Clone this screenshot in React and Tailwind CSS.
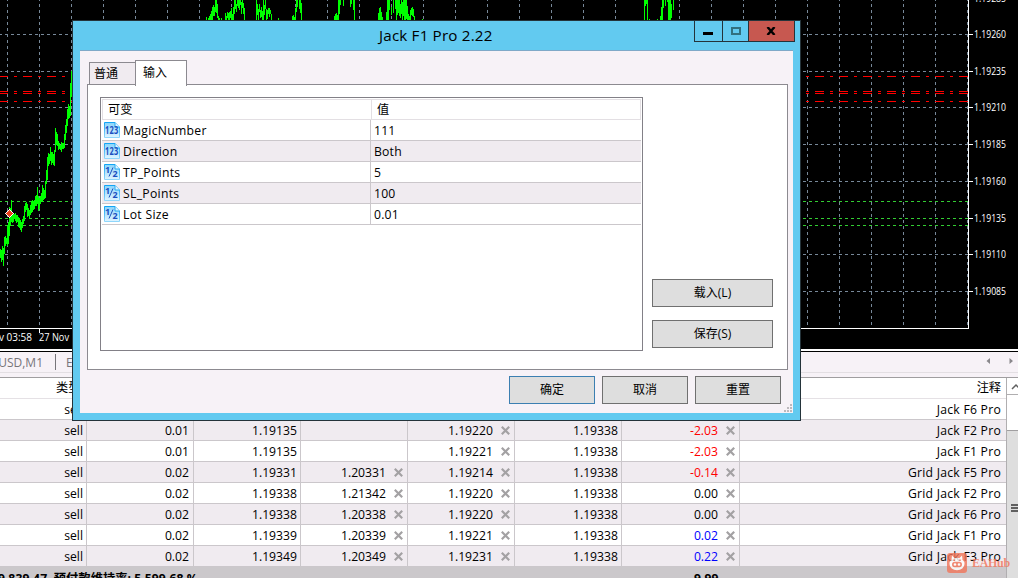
import React from 'react';

const orders = [
  { type: 'sell', size: '0.01', price: '', sl: '', tp: '', now: '', profit: '', comment: 'Jack F6 Pro' },
  { type: 'sell', size: '0.01', price: '1.19135', sl: '', tp: '1.19220', now: '1.19338', profit: '-2.03', comment: 'Jack F2 Pro' },
  { type: 'sell', size: '0.01', price: '1.19135', sl: '', tp: '1.19221', now: '1.19338', profit: '-2.03', comment: 'Jack F1 Pro' },
  { type: 'sell', size: '0.02', price: '1.19331', sl: '1.20331', tp: '1.19214', now: '1.19338', profit: '-0.14', comment: 'Grid Jack F5 Pro' },
  { type: 'sell', size: '0.02', price: '1.19338', sl: '1.21342', tp: '1.19220', now: '1.19338', profit: '0.00', comment: 'Grid Jack F2 Pro' },
  { type: 'sell', size: '0.02', price: '1.19338', sl: '1.20338', tp: '1.19220', now: '1.19338', profit: '0.00', comment: 'Grid Jack F6 Pro' },
  { type: 'sell', size: '0.02', price: '1.19339', sl: '1.20339', tp: '1.19221', now: '1.19338', profit: '0.02', comment: 'Grid Jack F1 Pro' },
  { type: 'sell', size: '0.02', price: '1.19349', sl: '1.20349', tp: '1.19231', now: '1.19338', profit: '0.22', comment: 'Grid Jack F3 Pro' },
];

const inputs = [
  { kind: '123', name: 'MagicNumber', value: '111' },
  { kind: '123', name: 'Direction', value: 'Both' },
  { kind: '1/2', name: 'TP_Points', value: '5' },
  { kind: '1/2', name: 'SL_Points', value: '100' },
  { kind: '1/2', name: 'Lot Size', value: '0.01' },
];

const prices = [
  [-2, '1.19285'], [34, '1.19260'], [71, '1.19235'], [107, '1.19210'], [144, '1.19185'],
  [181, '1.19160'], [218, '1.19135'], [254, '1.19110'], [291, '1.19085'],
];

// [top, bottom] of every one pixel bar, starting from x = 0
const leftBars = [
  [249, 258], [250, 262], [246, 260], [248, 266], [237, 254], [236, 246], [238, 244], [226, 246], [222, 244],
  [207, 236], [208, 226], [200, 222], [212, 223], [214, 222], [214, 219], [213, 221], [215, 223], [215, 222],
  [217, 227], [218, 228], [220, 230], [222, 232], [219, 228], [216, 224], [206, 221], [203, 212], [202, 210],
  [204, 217], [208, 216], [210, 219], [205, 215], [201, 213], [200, 212], [201, 210], [200, 209], [196, 206],
  [195, 206], [187, 204], [196, 211], [198, 209], [196, 204], [193, 201], [185, 202], [188, 200], [190, 199],
  [181, 198], [170, 184], [157, 180], [153, 166], [154, 164], [147, 161], [152, 165], [152, 163], [154, 165],
  [150, 166], [128, 152], [132, 145], [134, 146], [141, 150], [143, 149], [145, 150], [142, 152], [143, 149],
  [143, 149], [134, 148], [125, 140], [119, 133], [109, 126], [104, 119], [106, 118], [83, 116], [71, 97],
];

// spikes that reach above the dialog: [x, top, bottom]
const topBars = [
  [206, 17, 20], [208, 18, 20], [209, 16, 20], [210, 14, 20], [211, 11, 20], [212, 7, 20], [213, 5, 16], [214, 7, 16],
  [215, 0, 12], [216, 0, 13], [217, 4, 18], [218, 16, 20], [219, 18, 20], [221, 18, 20],
  [225, 13, 20], [226, 16, 20], [227, 12, 18], [228, 13, 20], [229, 12, 20], [230, 11, 18], [231, 8, 20], [232, 14, 20],
  [233, 7, 20], [234, 0, 14], [235, 0, 9], [236, 4, 12], [237, 0, 6], [238, 0, 8], [239, 0, 10], [240, 0, 5],
  [241, 2, 14], [242, 0, 8], [243, 3, 14], [244, 8, 20],
  [256, 0, 20], [257, 4, 15], [258, 9, 20], [259, 4, 12], [260, 10, 18], [261, 7, 17], [262, 11, 20], [263, 0, 20],
  [264, 5, 15], [265, 0, 9], [266, 9, 20], [267, 10, 19], [268, 8, 14], [269, 8, 17], [270, 10, 14], [271, 14, 20], [278, 18, 20],
  [292, 16, 20], [293, 15, 20], [294, 17, 20], [295, 8, 20], [296, 0, 12], [297, 0, 7], [299, 0, 9], [300, 0, 13], [301, 3, 20],
  [334, 16, 20], [335, 14, 20], [336, 13, 20], [337, 15, 20], [338, 0, 20], [339, 0, 14], [340, 0, 5], [343, 0, 6],
  [350, 0, 7], [351, 0, 4], [353, 0, 10], [354, 0, 20],
  [378, 13, 20], [379, 8, 20], [380, 7, 20], [381, 12, 20], [382, 17, 20], [386, 12, 20], [387, 0, 20], [388, 0, 20],
  [389, 0, 10], [391, 7, 15], [393, 0, 13], [395, 0, 9], [396, 0, 20], [397, 0, 15], [398, 0, 13], [399, 0, 16],
  [400, 4, 18], [401, 0, 14], [402, 2, 20], [403, 0, 16], [404, 0, 20], [405, 0, 20], [406, 0, 19], [407, 6, 20],
  [408, 14, 20], [409, 16, 20], [410, 10, 20], [411, 8, 15], [412, 7, 16], [413, 9, 17], [414, 16, 20], [422, 19, 20],
  [644, 0, 20], [645, 0, 6], [646, 0, 4], [647, 0, 20], [649, 19, 20], [657, 19, 20], [660, 16, 20], [661, 7, 20], [662, 0, 20],
  [663, 0, 8], [665, 0, 6], [667, 0, 2], [668, 0, 20], [669, 0, 20], [670, 0, 20], [671, 4, 18], [673, 0, 10],
];

const columns = Array.from({ length: 31 }, (_, i) => 7 + i * 32);

const Chart = () => (
  <svg width="1018" height="349" className="block shrink-0 bg-black" shapeRendering="crispEdges">
    <g stroke="#778899" strokeDasharray="3 3">
      {columns.map((x) => (
        <path key={x} d={`M${x + 0.5} -2V328`} />
      ))}
      {[34, 71, 107, 144, 181, 254, 291].map((y) => (
        <path key={y} d={`M-1 ${y + 0.5}H968`} />
      ))}
    </g>
    <g stroke="#32cd32" strokeDasharray="3 3">
      {[201, 218, 225].map((y) => (
        <path key={y} d={`M-1 ${y + 0.5}H968`} />
      ))}
    </g>
    <g stroke="#ff0000" strokeDasharray="9 6 3 6">
      {[76, 91, 93, 101].map((y) => (
        <path key={y} d={`M-1 ${y + 0.5}H968`} />
      ))}
    </g>
    <g fill="#00ff00">
      {leftBars.map(([top, bottom], x) => (
        <rect key={x} x={x} y={top} width="1" height={bottom - top} />
      ))}
      {topBars.map(([x, top, bottom]) => (
        <rect key={x} x={x} y={top} width="1" height={bottom - top} />
      ))}
    </g>
    <path d="M9.5 209.5L13.5 213.5L9.5 217.5L5.5 213.5Z" fill="#e8401c" stroke="#fff" />
    <path d="M8 212h3v-1h-2v5h1v-4" fill="#e8401c" />
    <path d="M0 328.5H968.5V0M39.5 329V333" fill="none" stroke="#fff" />
    {prices.map(([y, label]) => (
      <g key={label}>
        <path d={`M969 ${y + 0.5}H973`} stroke="#fff" />
        <text x="974" y={y + 4} textLength="32" lengthAdjust="spacingAndGlyphs" fill="#fff" className="font-['Open_Sans',sans-serif] text-[11px]">
          {label}
        </text>
      </g>
    ))}
    <g fill="#fff" className="font-['Open_Sans',sans-serif] text-[10px]">
      <text x="-1" y="341" textLength="33" lengthAdjust="spacingAndGlyphs">v 03:58</text>
      <text x="39" y="341" textLength="30" lengthAdjust="spacingAndGlyphs">27 Nov</text>
    </g>
  </svg>
);

const Cross = () => (
  <svg width="9" height="9" viewBox="0 0 9 9" className="mb-px ml-2 shrink-0">
    <path d="M0.8 0.8L8.2 8.2M8.2 0.8L0.8 8.2" stroke="#a3a1a3" strokeWidth="2.2" />
  </svg>
);

const ParamIcon = ({ kind }) => (
  <svg width="16" height="16" viewBox="0 0 16 16" className="mb-0.5 shrink-0">
    <defs>
      <linearGradient id="page" x1="0" y1="0" x2="0" y2="1">
        <stop offset="0" stopColor="#8ad4fa" />
        <stop offset="1" stopColor="#dff4ff" />
      </linearGradient>
      <linearGradient id="edge" x1="0" y1="0" x2="0" y2="1">
        <stop offset="0" stopColor="#12a5f5" />
        <stop offset="1" stopColor="#8fd6fb" />
      </linearGradient>
    </defs>
    <path d="M0.5 15.5V0.5H11L15.5 5V15.5Z" fill="url(#page)" stroke="url(#edge)" />
    <path d="M11 0.5V5H15.5" fill="#e4f6ff" stroke="#25a9f2" />
    {kind === '123' ? (
      <text x="1" y="12" textLength="13.5" lengthAdjust="spacingAndGlyphs" fill="#1b4fc0" className="font-['Open_Sans',sans-serif] text-[10px] font-bold">
        123
      </text>
    ) : (
      <g fill="#1b4fc0" className="font-['Open_Sans',sans-serif] text-[9px] font-bold">
        <text x="1" y="8.5">1</text>
        <path d="M5 12.5L9 3.5" stroke="#1b4fc0" />
        <text x="8.5" y="13">2</text>
      </g>
    )}
  </svg>
);

const TabBar = () => (
  <div className="flex h-[29px] shrink-0 flex-col bg-[#f7f2f7]">
    <div className="h-[3px] shrink-0 border-b border-black bg-white" />
    <div className="flex h-[21px] items-center border-b border-[#e3dfe3] text-[12px] text-[#77757a]">
      <span className="-ml-[7px] w-[50px] pt-px text-right whitespace-nowrap">JUSD,M1</span>
      <span className="ml-3 h-4 w-px bg-[#77757a]" />
      <span className="ml-2.5 pt-px">E</span>
      <svg width="30" height="8" viewBox="0 0 30 8" className="mr-0.5 mb-0.5 ml-auto shrink-0" fill="#8a888c">
        <path d="M4 1V7L0.5 4ZM23.5 1V7L27 4Z" />
      </svg>
    </div>
    <div className="mt-auto h-0.5 border-b border-[#a09ea0] bg-[#f7f2f7]" />
  </div>
);

const rowGrid = 'grid grid-cols-[87px_107px_107px_107px_107px_107px_118px_1fr]';
const cell = 'flex items-center justify-end border-r border-[#cbc7cb] pt-0.5';

const profitColor = (profit) => {
  if (profit.startsWith('-')) return 'text-[#ff0000]';
  return Number(profit) > 0 ? 'text-[#0000ff]' : 'text-black';
};

const OrderRow = ({ order, shaded }) => (
  <div className={`${rowGrid} h-[21px] shrink-0 border-b border-[#cbc7cb] ${shaded ? 'bg-[#f0ebf0]' : 'bg-white'}`}>
    <div className={`${cell} pr-[3px]`}>{order.type}</div>
    <div className={`${cell} pr-1`}>{order.size}</div>
    <div className={`${cell} pr-[3px]`}>{order.price}</div>
    <div className={`${cell} pr-1`}>{order.sl && <>{order.sl}<Cross /></>}</div>
    <div className={`${cell} pr-1`}>{order.tp && <>{order.tp}<Cross /></>}</div>
    <div className={`${cell} pr-[3px]`}>{order.now}</div>
    <div className={`${cell} pr-1 ${profitColor(order.profit)}`}>{order.profit && <>{order.profit}<Cross /></>}</div>
    <div className="flex items-center justify-end pt-0.5 pr-[5px] tracking-[0.25px]">{order.comment}</div>
  </div>
);

const Terminal = () => (
  <div className="flex h-[200px] shrink-0">
    <div className="flex w-[1006px] shrink-0 flex-col text-[12.2px]">
      <div className="flex h-[21px] shrink-0 items-center justify-between border-b border-[#e5e1e5] bg-white pt-px pr-[5px] pl-[56px]">
        <span>类型</span>
        <span>注释</span>
      </div>
      {orders.map((order, i) => (
        <OrderRow key={i} order={order} shaded={i % 2 === 1} />
      ))}
      <div className="flex h-[21px] shrink-0 items-center bg-[#cbc8cb] pt-1 font-bold">
        <span className="-ml-0.5 w-[696px] tracking-[0.1px] whitespace-pre">9 839.47  预付款维持率: 5 599.68 %</span>
        <span>9.99</span>
      </div>
    </div>
    <div className="flex grow flex-col border-l border-[#b0aeb0] bg-[#dedede]">
      <div className="flex h-[17px] items-center justify-center border-b border-[#b0aeb0] bg-white pl-1">
        <svg width="10" height="7" viewBox="0 0 10 7" className="shrink-0">
          <path d="M1 6L5 2L9 6" fill="none" stroke="#606060" strokeWidth="1.5" />
        </svg>
      </div>
      <div className="h-9 border-b border-[#a09ea0] bg-white" />
      <div className="mt-[73px] ml-1 flex flex-col gap-px">
        <div className="h-0.5 bg-[#606060]" />
        <div className="h-0.5 bg-[#606060]" />
        <div className="h-0.5 bg-[#606060]" />
      </div>
    </div>
  </div>
);

const Button = ({ className = 'w-[86px] border-[#707070]', children }) => (
  <button className={`flex h-7 items-center justify-center border bg-[#dedede] text-[12px] text-black ${className}`}>
    {children}
  </button>
);

const Dialog = () => (
  <div className="absolute top-5 left-[72px] flex h-[401px] w-[729px] flex-col border border-[#24333a] bg-[#62caf0]">
    {/* Title bar */}
    <div className="flex h-[29px] shrink-0">
      <div className="w-[621px] pl-[306px] text-[15.2px] leading-[28px] tracking-[0.18px] whitespace-nowrap">Jack F1 Pro 2.22</div>
      <div className="-mt-px flex h-[22px] w-[101px] border border-[#24333a]">
        <div className="flex w-[28px] items-end justify-center border-r border-[#24333a] pr-px pb-1.5">
          <div className="h-[3px] w-2.5 bg-black" />
        </div>
        <div className="flex w-[26px] items-center justify-center border-r border-[#24333a]">
          <div className="h-2 w-2.5 border-2 border-[#32707f]" />
        </div>
        <div className="flex grow items-center justify-center bg-[#c75850] pr-px">
          <svg width="10" height="8" viewBox="0 0 10 8">
            <path d="M1.5 0L8.5 8M8.5 0L1.5 8" stroke="#000" strokeWidth="2.4" />
          </svg>
        </div>
      </div>
    </div>

    <div className="mx-[7px] flex h-[363px] flex-col border-t border-[#7fa9c8] bg-[#f7f2f7] pr-[5px] pl-[7px]">
      {/* Tabs */}
      <div className="mt-[9px] flex h-[25px] items-end pl-0.5 text-[12px]">
        <div className="flex h-[23px] w-[46px] items-center border border-r-0 border-[#8c8a90] bg-[#f0ebf0] pl-1">普通</div>
        <div className="z-10 -mb-px flex h-[26px] w-[52px] items-center border border-b-0 border-[#8c8a90] bg-white pb-0.5 pl-[7px]">输入</div>
      </div>

      <div className="-mt-px flex h-[286px] border border-[#8c8a90] bg-white pt-3 pl-3">
        <div className="h-[254px] w-[543px] border border-[#828087] px-px pt-px text-[12.2px]">
          <div className="grid h-[21px] grid-cols-[269px_1fr] border border-[#e3dfe3] pt-0.5">
            <div className="-mt-0.5 flex items-center border-r border-[#e3dfe3] pt-0.5 pl-[5px]">可变</div>
            <div className="flex items-center pl-[5px]">值</div>
          </div>
          {inputs.map((input, i) => (
            <div
              key={input.name}
              className={`grid h-[21px] grid-cols-[269px_1fr] border-b border-[#cbc7cb] ${i % 2 ? 'bg-[#f0ebf0]' : 'bg-white'}`}
            >
              <div className="flex items-center gap-[3px] border-r border-[#cbc7cb] pt-0.5 pl-0.5 tracking-[0.3px]">
                <ParamIcon kind={input.kind} />
                {input.name}
              </div>
              <div className="flex items-center pt-0.5 pl-[3px] tracking-[0.2px]">{input.value}</div>
            </div>
          ))}
        </div>
        <div className="mt-[182px] ml-[9px] flex flex-col gap-[13px]">
          <Button className="w-[121px] border-[#707070]">载入(L)</Button>
          <Button className="w-[121px] border-[#707070]">保存(S)</Button>
        </div>
      </div>

      <div className="mt-1.5 flex gap-[7px] pl-[422px]">
        <Button className="w-[86px] border-[#3c7fb1]">确定</Button>
        <Button>取消</Button>
        <Button>重置</Button>
      </div>
    </div>

    {/* Resize grip */}
    <svg width="8" height="8" viewBox="0 0 8 8" className="absolute right-[8px] bottom-[8px]" fill="#bdb9bd">
      <path d="M6 0h2v2h-2zM3 3h2v2h-2zM6 3h2v2h-2zM0 6h2v2h-2zM3 6h2v2h-2zM6 6h2v2h-2z" />
    </svg>
  </div>
);

const Watermark = () => (
  <div className="absolute top-[553px] left-[947px] flex items-center gap-[5px] opacity-80">
    <svg width="20" height="20" viewBox="0 0 20 20">
      <rect width="20" height="20" rx="3" fill="#f2755a" />
      <path d="M5 2.5L8 5.5L4.5 6.5ZM15 2.5L12 5.5L15.5 6.5Z" fill="#fff" />
      <ellipse cx="10" cy="11" rx="7.5" ry="6.2" fill="#fff" />
      <circle cx="7" cy="7.2" r="0.9" fill="#f2755a" />
      <circle cx="13" cy="7.2" r="0.9" fill="#f2755a" />
      <rect x="5" y="8.8" width="10" height="5.4" rx="2.7" fill="#f2755a" />
      <circle cx="8" cy="11.5" r="1.2" fill="#fff" />
      <circle cx="12" cy="11.5" r="1.2" fill="#fff" />
    </svg>
    <span className="font-['Liberation_Serif',serif] text-[12px] leading-5 font-bold tracking-[-0.3px] text-[#f2755a]">EAHub</span>
  </div>
);

export default function App() {
  return (
    <div className="relative flex h-[578px] w-[1018px] flex-col overflow-hidden bg-white font-['Open_Sans','Noto_Sans_CJK_SC',sans-serif] leading-none text-black">
      <Chart />
      <TabBar />
      <Terminal />
      <Dialog />
      <Watermark />
    </div>
  );
}
